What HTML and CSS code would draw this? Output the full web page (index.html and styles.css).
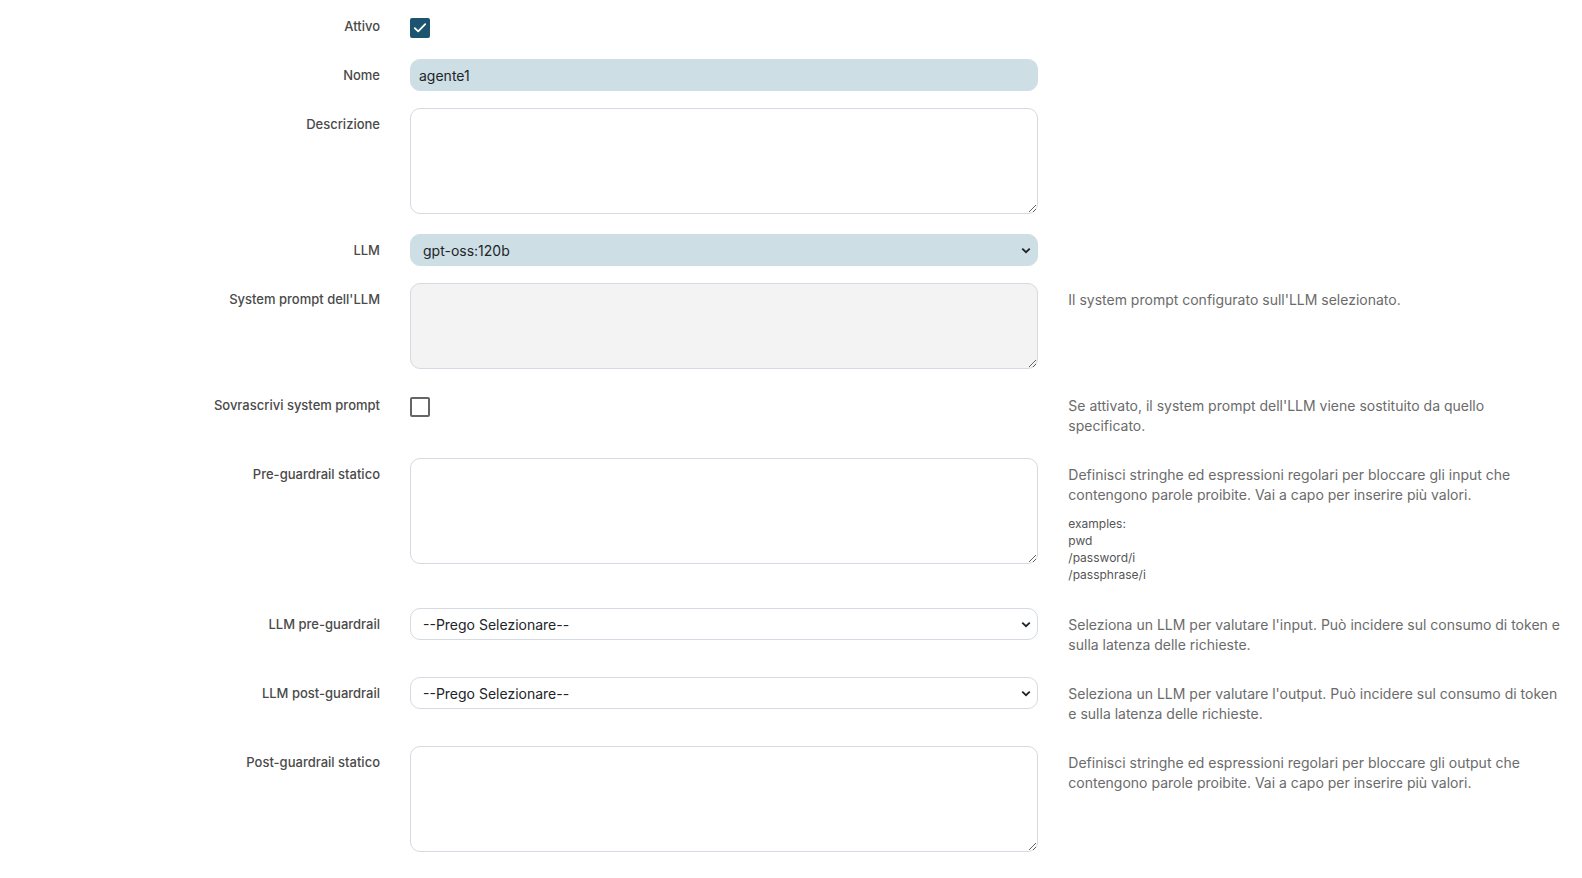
FILE: index.html
```html
<!DOCTYPE html>
<html lang="it">
   <head>
      <meta charset="utf-8" />
      <title>Agente</title>
      <link rel="stylesheet" href="styles.css">
   </head>
   <body>
      <form class="agent-form">

         <div class="form-row">
            <label class="form-label" for="attivo">Attivo</label>
            <div class="form-field check-field">
               <input class="check" type="checkbox" id="attivo" checked />
            </div>
         </div>

         <div class="form-row">
            <label class="form-label" for="nome">Nome</label>
            <div class="form-field">
               <input class="control control-filled" type="text" id="nome" value="agente1" />
            </div>
         </div>

         <div class="form-row row-tall">
            <label class="form-label" for="descrizione">Descrizione</label>
            <div class="form-field">
               <textarea class="control area" id="descrizione"></textarea>
            </div>
         </div>

         <div class="form-row">
            <label class="form-label" for="llm">LLM</label>
            <div class="form-field">
               <select class="control select control-filled" id="llm">
                  <option>gpt-oss:120b</option>
               </select>
            </div>
         </div>

         <div class="form-row row-tall">
            <label class="form-label" for="llm_prompt">System prompt dell'LLM</label>
            <div class="form-field">
               <textarea class="control area area-short" id="llm_prompt" readonly></textarea>
            </div>
            <p class="help">Il system prompt configurato sull'LLM selezionato.</p>
         </div>

         <div class="form-row">
            <label class="form-label" for="override">Sovrascrivi system prompt</label>
            <div class="form-field check-field">
               <input class="check" type="checkbox" id="override" />
            </div>
            <p class="help">Se attivato, il system prompt dell'LLM viene sostituito da quello specificato.</p>
         </div>

         <div class="form-row">
            <label class="form-label" for="pre_static">Pre-guardrail statico</label>
            <div class="form-field">
               <textarea class="control area" id="pre_static"></textarea>
            </div>
            <div class="help">
               <p class="help-text">Definisci stringhe ed espressioni regolari per bloccare gli input che contengono parole proibite. Vai a capo per inserire più valori.</p>
               <div class="examples">examples:<br>pwd<br>/password/i<br>/passphrase/i</div>
            </div>
         </div>

         <div class="form-row">
            <label class="form-label" for="pre_llm">LLM pre-guardrail</label>
            <div class="form-field">
               <select class="control select" id="pre_llm">
                  <option>--Prego Selezionare--</option>
               </select>
            </div>
            <p class="help">Seleziona un LLM per valutare l'input. Può incidere sul consumo di token e sulla latenza delle richieste.</p>
         </div>

         <div class="form-row">
            <label class="form-label" for="post_llm">LLM post-guardrail</label>
            <div class="form-field">
               <select class="control select" id="post_llm">
                  <option>--Prego Selezionare--</option>
               </select>
            </div>
            <p class="help">Seleziona un LLM per valutare l'output. Può incidere sul consumo di token e sulla latenza delle richieste.</p>
         </div>

         <div class="form-row">
            <label class="form-label" for="post_static">Post-guardrail statico</label>
            <div class="form-field">
               <textarea class="control area" id="post_static"></textarea>
            </div>
            <p class="help">Definisci stringhe ed espressioni regolari per bloccare gli output che contengono parole proibite. Vai a capo per inserire più valori.</p>
         </div>

      </form>
   </body>
</html>
```

FILE: styles.css
```css
body {
   margin: 0;
   font-family: 'Inter', 'Noto Sans', sans-serif;
   background-color: #ffffff;
   color: #212529;
}

.agent-form {
   width: 1580px;
   padding-top: 10px;
}

.form-row {
   display: grid;
   grid-template-columns: 3fr 5fr 4fr; /* label / field / help */
   align-items: start;
   margin-bottom: 17px;
}

.row-tall {
   margin-bottom: 20px;
}

.form-label {
   padding: 7px 15px 0;
   text-align: right;
   font-size: 13px;
   line-height: 18px;
   font-weight: 500;
   color: #4a4a4a;
}

.form-field {
   padding: 0 15px;
}

.check-field {
   height: 32px;
   padding-top: 8px;
   box-sizing: border-box;
}

.check {
   appearance: none;
   display: block;
   width: 20px;
   height: 20px;
   margin: 0;
   border: 2px solid #666;
   border-radius: 2px;
   background: #fff;
   box-sizing: border-box;
}

.check:checked {
   border-color: #1c5470;
   background: #1c5470 url("data:image/svg+xml,%3Csvg xmlns='http://www.w3.org/2000/svg' viewBox='0 0 20 20'%3E%3Cpath d='M4.8 10.2l3.4 3.2 7-7.2' fill='none' stroke='%23fff' stroke-width='1.8' stroke-linecap='round' stroke-linejoin='round'/%3E%3C/svg%3E") center / 20px 20px no-repeat;
}

.control {
   display: block;
   width: 100%;
   box-sizing: border-box;
   height: 32px;
   margin: 0;
   padding: 0 8px;
   font-family: 'Inter', 'Noto Sans', sans-serif;
   font-size: 14px;
   color: #212529;
   background-color: #fff;
   border: 1px solid #d3dae1;
   border-radius: 10px;
   outline: none;
}

.control-filled {
   background-color: #cedee5;
   border-color: #cedee5;
}

.select {
   appearance: none;
   padding-left: 12px;
   background-image: url("data:image/svg+xml,%3Csvg xmlns='http://www.w3.org/2000/svg' viewBox='0 0 12 8'%3E%3Cpath d='M1.5 1.8L6 6l4.5-4.2' fill='none' stroke='%23222' stroke-width='2.2'/%3E%3C/svg%3E");
   background-repeat: no-repeat;
   background-position: right 6px center;
   background-size: 10px 7px;
}

.area {
   height: 106px;
   padding: 6px 8px;
   resize: vertical;
}

.area-short {
   height: 86px;
   background-color: #f3f3f3;
}

.help {
   margin: 7px 15px 5px;
   font-size: 14px;
   line-height: 20px;
   color: #6b6b6b;
}

.help-text {
   margin: 0;
}

.examples {
   margin: 10px 0 3px;
   font-size: 12px;
   line-height: 17px;
   color: #555;
}
```
